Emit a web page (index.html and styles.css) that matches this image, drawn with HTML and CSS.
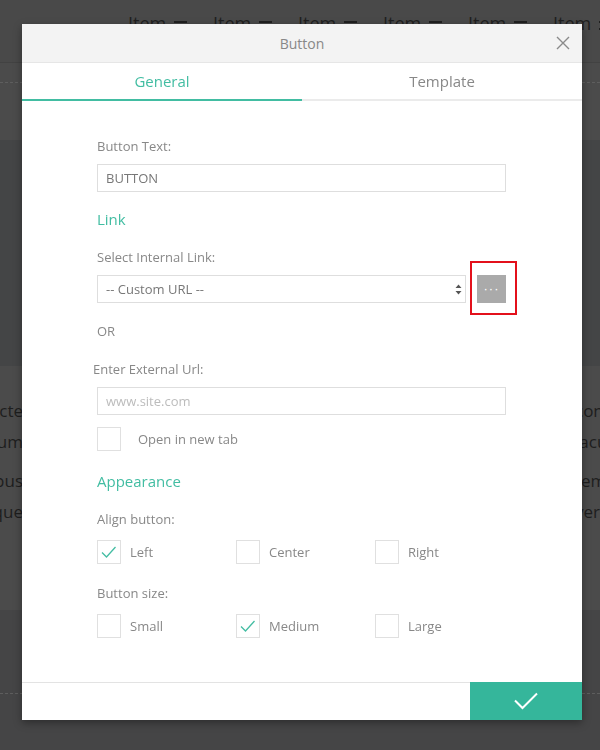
FILE: index.html
```html
<!DOCTYPE html>
<html lang="en">
<head>
  <meta charset="UTF-8">
  <title>Button</title>
  <link rel="stylesheet" href="styles.css">
</head>
<body>

  <div class="page">
    <header class="site-nav">
      <nav class="site-menu">
        <span class="menu-item">Item <i class="menu-icon"></i></span>
        <span class="menu-item">Item <i class="menu-icon"></i></span>
        <span class="menu-item">Item <i class="menu-icon"></i></span>
        <span class="menu-item">Item <i class="menu-icon"></i></span>
        <span class="menu-item">Item <i class="menu-icon"></i></span>
        <span class="menu-item">Item <i class="menu-icon"></i></span>
      </nav>
    </header>

    <section class="band band-intro"><hr class="dash"></section>
    <section class="band band-dark"></section>

    <section class="band band-text">
      <div class="bg-para">
        <div class="bg-line"><span class="bg-left">recte</span><span class="bg-right">consectetur</span></div>
        <div class="bg-line"><span class="bg-left">ipsum</span><span class="bg-right">lacus</span></div>
      </div>
      <div class="bg-para">
        <div class="bg-line"><span class="bg-left">tempus</span><span class="bg-right">tempor</span></div>
        <div class="bg-line"><span class="bg-left">neque</span><span class="bg-right">verissimus</span></div>
      </div>
    </section>

    <section class="band band-bottom"><hr class="dash"></section>
  </div>

  <div class="modal">
    <div class="modal-header">
      <span class="modal-title">Button</span>
      <button class="close-btn" type="button" aria-label="Close">
        <svg width="14" height="14" viewBox="0 0 14 14"><path d="M1 1 L13 13 M13 1 L1 13" stroke="#8a8a8a" stroke-width="1.4" fill="none"/></svg>
      </button>
    </div>

    <div class="modal-tabs">
      <div class="tab active">General</div>
      <div class="tab">Template</div>
    </div>

    <div class="modal-body">
      <div class="field-label">Button Text:</div>
      <input class="text-input" type="text" value="BUTTON">

      <h3 class="section-title">Link</h3>

      <div class="field-label">Select Internal Link:</div>
      <div class="link-row">
        <div class="select-box">
          <span>-- Custom URL --</span>
          <svg width="7" height="11" viewBox="0 0 7 11"><path d="M3.5 0.5 L6.5 4 L0.5 4 Z M0.5 7 L6.5 7 L3.5 10.5 Z" fill="#555"/></svg>
        </div>
        <button class="dots-btn" type="button">&middot;&middot;&middot;</button>
      </div>

      <div class="or-text">OR</div>

      <div class="field-label shifted">Enter External Url:</div>
      <input class="text-input" type="text" placeholder="www.site.com">

      <label class="check-option new-tab">
        <span class="check-box"></span>
        Open in new tab
      </label>

      <h3 class="section-title appearance">Appearance</h3>

      <div class="field-label">Align button:</div>
      <div class="option-grid">
        <label class="check-option">
          <span class="check-box checked">
            <svg width="22" height="22" viewBox="0 0 22 22"><path d="M4 11.5 L8.5 16 L17.5 6" stroke="#44bda3" stroke-width="1.3" fill="none"/></svg>
          </span>
          Left
        </label>
        <label class="check-option"><span class="check-box"></span> Center</label>
        <label class="check-option"><span class="check-box"></span> Right</label>
      </div>

      <div class="field-label size-label">Button size:</div>
      <div class="option-grid">
        <label class="check-option"><span class="check-box"></span> Small</label>
        <label class="check-option">
          <span class="check-box checked">
            <svg width="22" height="22" viewBox="0 0 22 22"><path d="M4 11.5 L8.5 16 L17.5 6" stroke="#44bda3" stroke-width="1.3" fill="none"/></svg>
          </span>
          Medium
        </label>
        <label class="check-option"><span class="check-box"></span> Large</label>
      </div>
    </div>

    <div class="modal-footer">
      <button class="save-btn" type="button" aria-label="Save">
        <svg width="24" height="18" viewBox="0 0 24 18"><path d="M1 8.5 L8.5 16 L23 1.5" stroke="#fff" stroke-width="2" fill="none"/></svg>
      </button>
    </div>
  </div>

</body>
</html>
```

FILE: styles.css
```css
* {
  box-sizing: border-box;
}

html, body {
  margin: 0;
}

body {
  font-family: "Open Sans", Arial, sans-serif;
  background: #4a4a4a;
  height: 750px;
  overflow: hidden;
}

/* dimmed page behind the dialog */

.site-nav {
  height: 63px;
  background: #494949;
  border-bottom: 1px solid #424242;
  padding: 11px 0 0 128px;
}

.site-menu {
  display: flex;
}

.menu-item {
  width: 85px;
  flex-shrink: 0;
  display: flex;
  align-items: center;
  gap: 8px;
  font-size: 18px;
  line-height: 24px;
  color: #1f1f1f;
  white-space: nowrap;
}

.menu-icon {
  width: 13px;
  height: 9px;
  border-top: 2px solid #1f1f1f;
  border-bottom: 2px solid #1f1f1f;
  margin-top: 4px;
}

.band-intro {
  height: 77px;
  background: #4b4b4b;
  padding-top: 19px;
}

.dash {
  margin: 0;
  border: 0;
  border-top: 1px dashed #5e5e5e;
}

.band-dark {
  height: 226px;
  background: #444546;
}

.band-text {
  height: 244px;
  background: #4b4b4b;
  padding-top: 29px;
}

.bg-para {
  margin-bottom: 8px;
}

.bg-line {
  display: flex;
  justify-content: space-between;
  font-size: 17px;
  line-height: 31px;
  color: #1e1e1e;
}

.bg-left {
  width: 23px;
  display: flex;
  justify-content: flex-end;
  white-space: nowrap;
}

.bg-right {
  width: 25px;
  white-space: nowrap;
}

.band-bottom {
  height: 140px;
  background: #454546;
  padding-top: 83px;
}

/* dialog */

.modal {
  position: fixed;
  top: 24px;
  left: 22px;
  width: 560px;
  height: 696px;
  background: #fff;
  box-shadow: 0 3px 8px rgba(0, 0, 0, 0.35);
  display: flex;
  flex-direction: column;
}

.modal-header {
  position: relative;
  height: 39px;
  background: #f3f3f3;
  border-bottom: 1px solid #e6e6e6;
  display: flex;
  align-items: center;
  justify-content: center;
  font-size: 14px;
  color: #888;
}

.close-btn {
  position: absolute;
  right: 12px;
  top: 12px;
  padding: 0;
  border: none;
  background: none;
  width: 14px;
  height: 14px;
  cursor: pointer;
}

.close-btn svg {
  display: block;
}

.modal-tabs {
  display: flex;
  height: 38px;
}

.tab {
  flex: 1;
  display: flex;
  align-items: center;
  justify-content: center;
  font-size: 15px;
  color: #888;
  border-bottom: 2px solid #ebebeb;
}

.tab.active {
  color: #42bda2;
  border-bottom-color: #42bda2;
}

.modal-body {
  flex: 1;
  padding: 36px 76px 0 75px;
}

.field-label {
  font-size: 13px;
  line-height: 18px;
  color: #888;
  margin-bottom: 9px;
}

.field-label.shifted {
  margin-top: 20px;
  margin-left: -4px;
}

.text-input {
  display: block;
  width: 100%;
  height: 28px;
  border: 1px solid #dedede;
  padding: 0 8px;
  font-family: inherit;
  font-size: 13px;
  color: #777;
  outline: none;
}

.text-input::placeholder {
  color: #bcbcbc;
}

.section-title {
  margin: 17px 0 19px;
  font-size: 15px;
  line-height: 20px;
  font-weight: normal;
  color: #42bda2;
}

.section-title.appearance {
  margin-top: 20px;
}

.link-row {
  display: flex;
  gap: 11px;
  height: 28px;
  margin-top: 1px;
}

.select-box {
  flex: 1;
  height: 28px;
  border: 1px solid #dedede;
  padding: 0 3px 0 8px;
  display: flex;
  align-items: center;
  justify-content: space-between;
  font-size: 13px;
  color: #777;
}

.dots-btn {
  position: relative;
  width: 29px;
  height: 28px;
  border: none;
  padding: 0 0 2px;
  background: #aaa;
  color: #fff;
  font-size: 13px;
  letter-spacing: 1px;
  cursor: pointer;
}

/* highlight marker around the browse button */
.dots-btn::after {
  content: "";
  position: absolute;
  top: -14px;
  left: -7px;
  right: -11px;
  bottom: -12px;
  border: 2px solid #e3101b;
}

.or-text {
  margin-top: 19px;
  font-size: 13px;
  line-height: 18px;
  color: #888;
}

.check-option {
  display: flex;
  align-items: center;
  gap: 9px;
  font-size: 13px;
  color: #888;
}

.check-option.new-tab {
  margin-top: 12px;
  gap: 17px;
}

.check-box {
  width: 24px;
  height: 24px;
  flex-shrink: 0;
  border: 1px solid #e0e0e0;
  display: flex;
  align-items: center;
  justify-content: center;
}

.option-grid {
  display: grid;
  grid-template-columns: 139px 139px 1fr;
  margin-top: 12px;
}

.size-label {
  margin-top: 20px;
  margin-bottom: 0;
}

.modal-footer {
  height: 38px;
  border-top: 1px solid #e3e3e3;
  display: flex;
  justify-content: flex-end;
}

.save-btn {
  width: 112px;
  height: 38px;
  margin-top: -1px;
  border: none;
  background: #35b69b;
  display: flex;
  align-items: center;
  justify-content: center;
  cursor: pointer;
}
```
